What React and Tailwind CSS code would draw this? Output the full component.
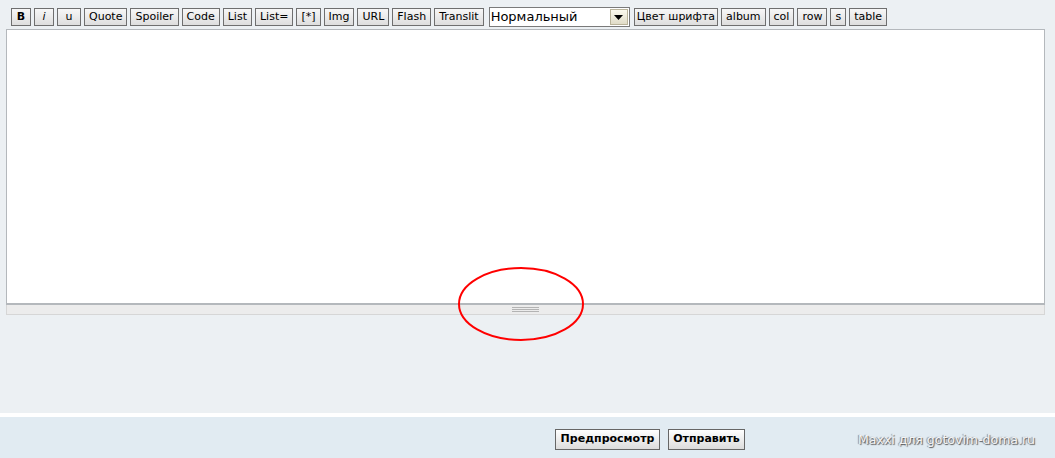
import React from "react";

const tools = ["B", "i", "u", "Quote", "Spoiler", "Code", "List", "List=", "[*]", "Img", "URL", "Flash", "Translit"];
const tools2 = ["Цвет шрифта", "album", "col", "row", "s", "table"];

function ToolButton({ label }) {
  const extra =
    label === "B"
      ? "font-bold w-[20px]"
      : label === "i"
      ? "italic w-[20px]"
      : label === "u"
      ? "w-[24px]"
      : label === "Цвет шрифта"
      ? "px-[2px]"
      : "px-[4px]";
  return (
    <button
      className={`h-[18px] border border-[#6f6f6f] bg-gradient-to-b from-[#f7f7f7] to-[#dedede] text-[11px] leading-[16px] text-black ${extra}`}
    >
      {label}
    </button>
  );
}

export default function App() {
  return (
    <div
      className="relative w-[1055px] h-[458px] bg-[#ecf0f3] overflow-hidden"
      style={{ fontFamily: '"DejaVu Sans", Verdana, sans-serif' }}
    >
      <div className="h-[413px] pt-[7px]">
        <div className="flex items-center gap-[3px] pl-[11px] h-[20px]">
          {tools.map((t) => (
            <ToolButton key={t} label={t} />
          ))}
          <div className="ml-[2px] flex h-[20px] w-[141px] items-center border border-[#7a7a7a] bg-white">
            <span className="flex-1 pl-[1px] text-[13px] leading-[18px] text-black">Нормальный</span>
            <span className="mr-[1px] flex h-[16px] w-[18px] items-center justify-center border border-[#b9b39a] bg-gradient-to-b from-[#fbf9ee] to-[#e0dcc8]">
              <svg width="9" height="5" viewBox="0 0 9 5">
                <path d="M0 0h9L4.5 5z" fill="#000" />
              </svg>
            </span>
          </div>
          <div className="ml-[1px] flex gap-[3px]">
            {tools2.map((t) => (
              <ToolButton key={t} label={t} />
            ))}
          </div>
        </div>
        <div className="mt-[2px] ml-[6px] w-[1039px]">
          <div className="h-[276px] border border-[#b4b8bc] border-b-2 bg-white" />
          <div className="flex h-[10px] items-center justify-center border border-t-0 border-[#d6d6d6] bg-[#ececec]">
            <div className="flex flex-col gap-[1px]">
              <div className="h-px w-[27px] bg-[#b3b3b3]" />
              <div className="h-px w-[27px] bg-[#b3b3b3]" />
              <div className="h-px w-[27px] bg-[#b3b3b3]" />
            </div>
          </div>
        </div>
      </div>
      <div className="h-[4px] bg-white" />
      <div className="flex h-[41px] items-center bg-[#e1ebf2] pt-[3px]">
        <div className="ml-[555px] flex gap-[8px]">
          <button className="h-[21px] w-[105px] border border-[#666] bg-gradient-to-b from-white to-[#dcdcdc] text-[11px] font-bold text-black">
            Предпросмотр
          </button>
          <button className="h-[21px] w-[77px] border border-[#666] bg-gradient-to-b from-white to-[#dcdcdc] text-[11px] font-bold text-black">
            Отправить
          </button>
        </div>
        <div
          className="ml-auto mr-[20px] mt-[2px] text-[12.5px] text-[#f4f4f4]"
          style={{ textShadow: "1px 1px 1px #555, -1px 0 1px #888" }}
        >
          Maxxi для gotovim-doma.ru
        </div>
      </div>
      <svg className="absolute left-[457px] top-[266px]" width="128" height="76" viewBox="0 0 128 76">
        <ellipse cx="64" cy="38" rx="62" ry="36" fill="none" stroke="#ff0000" strokeWidth="2" />
      </svg>
    </div>
  );
}
